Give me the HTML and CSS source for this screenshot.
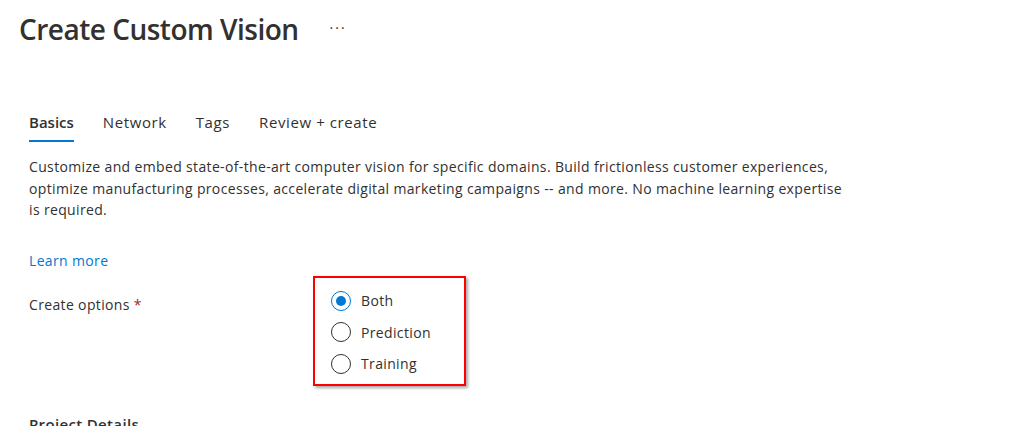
FILE: index.html
```html
<!DOCTYPE html>
<html>
<head>
<meta charset="utf-8">
<link rel="stylesheet" href="styles.css">
</head>
<body>
<div class="page">
  <header class="header">
    <h1 class="title">Create Custom Vision</h1>
    <span class="more">···</span>
  </header>
  <nav class="tabs">
    <span class="tab active">Basics</span>
    <span class="tab">Network</span>
    <span class="tab">Tags</span>
    <span class="tab">Review + create</span>
  </nav>
  <p class="desc">Customize and embed state-of-the-art computer vision for specific domains. Build frictionless customer experiences, optimize manufacturing processes, accelerate digital marketing campaigns -- and more. No machine learning expertise is required.</p>
  <a class="link">Learn more</a>
  <div class="field">
    <div class="label">Create options <span class="req">*</span></div>
    <div class="options">
      <div class="option"><span class="radio checked"></span><span>Both</span></div>
      <div class="option"><span class="radio"></span><span>Prediction</span></div>
      <div class="option"><span class="radio"></span><span>Training</span></div>
    </div>
  </div>
  <h2 class="section">Project Details</h2>
</div>
</body>
</html>
```
FILE: styles.css
```css
* { box-sizing: border-box; }
html, body { margin: 0; padding: 0; background: #fff; overflow: hidden; }
body {
  font-family: "Segoe UI", "Open Sans", "Noto Sans", sans-serif;
  color: #323130;
  font-size: 14px;
  letter-spacing: 0.35px;
}
.page { padding: 0 0 0 29px; width: 1012px; height: 426px; }
.header { display: flex; align-items: center; margin-left: -10px; height: 58px; }
.title { margin: 0; font-size: 28px; font-weight: 600; color: #323130; letter-spacing: -0.5px; }
.more { margin-left: 31px; font-size: 14px; color: #323130; letter-spacing: 2px; margin-top: -4px; }
.tabs { display: flex; gap: 29px; margin-top: 51px; height: 33px; }
.tab { font-size: 15px; line-height: 26px; color: #323130; position: relative; height: 33px; letter-spacing: 0.6px; }
.tab.active { font-weight: 600; letter-spacing: 0; }
.tab.active::after { content: ""; position: absolute; left: 0; right: 0; bottom: 0; height: 2px; background: #0078d4; }
.desc { margin: 14px 0 0; width: 815px; line-height: 21.5px; font-size: 14px; }
.link { display: block; margin-top: 30px; color: #0078d4; font-size: 14px; line-height: 20px; }
.field { display: flex; margin-top: 5px; }
.label { width: 284px; padding-top: 19px; font-size: 14px; line-height: 20px; }
.req { color: #a4262c; }
.options {
  border: 2px solid #f00;
  width: 153px; height: 110px;
  padding: 13px 0 0 16px;
  box-shadow: 2px 2px 3px rgba(0,0,0,0.35);
  display: flex; flex-direction: column; gap: 11.5px;
}
.option { display: flex; align-items: center; gap: 10px; height: 20px; font-size: 14px; }
.radio { width: 20px; height: 20px; border: 1px solid #323130; border-radius: 50%; position: relative; flex: none; }
.radio.checked { border-color: #0078d4; }
.radio.checked::after { content: ""; position: absolute; left: 4px; top: 4px; width: 10px; height: 10px; border-radius: 50%; background: #0078d4; }
.section { margin: 28px 0 0; font-size: 15px; font-weight: 600; }
```
